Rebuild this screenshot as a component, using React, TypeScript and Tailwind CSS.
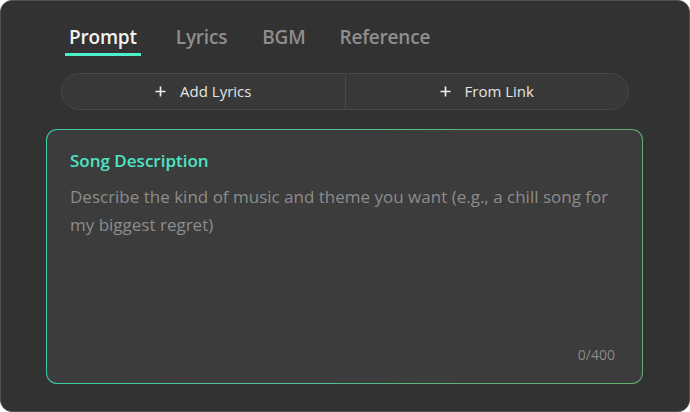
import React from "react";

const font = { fontFamily: '"Open Sans", "Noto Sans", sans-serif' };

function PlusIcon() {
  return (
    <svg width="11" height="11" viewBox="0 0 11 11" className="shrink-0">
      <path d="M5.5 0.5v10M0.5 5.5h10" stroke="#ececec" strokeWidth="1.7" />
    </svg>
  );
}

export default function App() {
  const tabs = [
    { t: "Prompt", cls: "ml-[64px]" },
    { t: "Lyrics", cls: "ml-[31px]" },
    { t: "BGM", cls: "ml-[27px]" },
    { t: "Reference", cls: "ml-[26px]" },
  ];
  return (
    <div
      className="w-[690px] h-[412px] bg-[#323232] rounded-[12px] border border-[#505050] overflow-hidden flex flex-col"
      style={font}
    >
      <div className="flex items-start pt-[23px]">
        {tabs.map((x, i) => (
          <div key={x.t} className={"flex flex-col items-stretch " + x.cls}>
            <div
              className={
                "px-[4px] text-[19px] leading-[26px] font-semibold tracking-[-0.2px] " +
                (i === 0 ? "text-[#f2f2f2]" : "text-[#8e8e8e]")
              }
            >
              {x.t}
            </div>
            <div
              className={
                "mt-[3px] h-[3px] " + (i === 0 ? "bg-[#4cf0cb]" : "bg-transparent")
              }
            />
          </div>
        ))}
      </div>

      <div className="ml-[60px] mt-[17px] w-[568px] h-[37px] rounded-full border border-[#484848] bg-[#383838] flex">
        <div className="flex-1 flex items-center justify-center gap-[14px] text-[#e4e4e4] text-[15px]">
          <PlusIcon />
          <span>Add Lyrics</span>
        </div>
        <div className="w-px bg-[#484848]" />
        <div className="flex-1 flex items-center justify-center gap-[14px] text-[#e4e4e4] text-[15px]">
          <PlusIcon />
          <span>From Link</span>
        </div>
      </div>

      <div className="ml-[45px] mt-[19px] w-[597px] h-[255px] rounded-[11px] p-px bg-gradient-to-r from-[#3ccaa9] to-[#62ad6a]">
        <div className="w-full h-full rounded-[10px] bg-[#3c3c3c] flex flex-col pl-[23px] pr-[20px] pt-[19px] pb-[18px]">
          <div className="text-[#4ce5c3] text-[17px] leading-[24px] font-semibold">
            Song Description
          </div>
          <div className="mt-[10px] text-[#8c8c8c] text-[17px] leading-[28px]">
            <div className="whitespace-nowrap">
              Describe the kind of music and theme you want (e.g., a chill song for
            </div>
            <div className="whitespace-nowrap">my biggest regret)</div>
          </div>
          <div className="mt-auto self-end mr-[7px] text-[#8a8a8a] text-[14px] leading-[20px]">
            0/400
          </div>
        </div>
      </div>
    </div>
  );
}
